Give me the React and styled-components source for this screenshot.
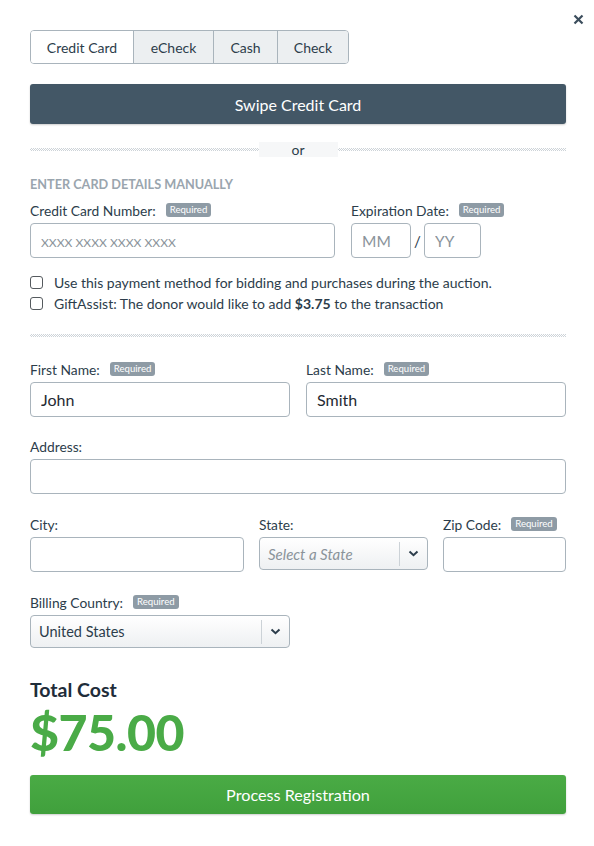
import React from "react";
import styled, { createGlobalStyle } from "styled-components";

const Global = createGlobalStyle`
  html, body { margin: 0; padding: 0; background: #fff; }
  body { font-family: Lato, "Open Sans", Arial, sans-serif; color: #2c3d4b; }
  * { box-sizing: border-box; }
`;

const Page = styled.div`
  position: relative;
  width: 594px;
  min-height: 846px;
  padding: 30px 28px 30px 30px;
  display: flex;
  flex-direction: column;
`;

const Close = styled.button`
  position: absolute;
  top: 12px;
  right: 9px;
  width: 14px;
  height: 14px;
  padding: 0;
  border: 0;
  background: none;
  display: flex;
  align-items: center;
  justify-content: center;
  cursor: pointer;
`;

const Tabs = styled.div`
  display: flex;
  align-self: flex-start;
  height: 34px;
  border: 1px solid #a9b4bc;
  border-radius: 4px;
  overflow: hidden;
`;

const Tab = styled.button`
  font: inherit;
  font-size: 14px;
  color: #2c3d4b;
  width: ${(p) => p.$w}px;
  padding: 0;
  border: 0;
  border-left: ${(p) => (p.$first ? "0" : "1px solid #a9b4bc")};
  background: ${(p) => (p.$active ? "#ffffff" : "#eceff1")};
  cursor: pointer;
`;

const SwipeButton = styled.button`
  margin-top: 20px;
  height: 40px;
  width: 100%;
  border: 0;
  border-radius: 3px;
  background: #435766;
  color: #fff;
  font: inherit;
  font-size: 16px;
  box-shadow: 0 1px 2px rgba(0, 0, 0, 0.2);
`;

const Dots = styled.div`
  flex: 1;
  height: 3px;
  background: repeating-conic-gradient(#cdd3d8 0 25%, transparent 0 50%) 0 0 / 2px 2px;
`;

const OrRow = styled.div`
  margin-top: 18px;
  height: 15px;
  display: flex;
  align-items: center;
`;

const OrText = styled.span`
  width: 79px;
  height: 15px;
  background: #f6f7f8;
  text-align: center;
  font-size: 14px;
  line-height: 15px;
  color: #2c3d4b;
`;

const Divider = styled(Dots)`
  flex: none;
  width: 100%;
  margin-top: ${(p) => p.$mt}px;
`;

const SectionTitle = styled.div`
  margin-top: 20px;
  font-size: 12.7px;
  line-height: 14px;
  font-weight: 700;
  color: #9aa5ae;
  text-transform: uppercase;
`;

const Grid = styled.div`
  display: grid;
  grid-template-columns: ${(p) => p.$cols};
  column-gap: ${(p) => p.$gap}px;
  margin-top: ${(p) => p.$mt}px;
`;

const Field = styled.div`
  display: flex;
  flex-direction: column;
  min-width: 0;
`;

const Label = styled.div`
  height: 16px;
  margin-bottom: 5px;
  display: flex;
  align-items: center;
  font-size: 13.8px;
  color: #2c3d4b;
  white-space: nowrap;
`;

const Badge = styled.span`
  margin-left: 10px;
  background: #8e9ba5;
  color: #fff;
  font-size: 9.6px;
  line-height: 14px;
  height: 14px;
  padding: 0 4px;
  border-radius: 3px;
`;

const Input = styled.input`
  width: ${(p) => (p.$w ? `${p.$w}px` : "100%")};
  height: 35px;
  border: 1px solid #a9b4bc;
  border-radius: 4px;
  padding: 0 10px;
  font: inherit;
  font-size: 16px;
  color: #1f2a33;
  background: #fff;
  outline: none;
  &::placeholder {
    color: #8a939a;
    font-size: ${(p) => (p.$small ? 12.1 : 15.5)}px;
  }
`;

const ExpRow = styled.div`
  display: flex;
  align-items: center;
`;

const Slash = styled.span`
  width: 13px;
  text-align: center;
  font-size: 15px;
  color: #2c3d4b;
`;

const Checks = styled.div`
  margin-top: 14px;
  display: flex;
  flex-direction: column;
`;

const CheckRow = styled.label`
  height: 21px;
  display: flex;
  align-items: center;
  font-size: 14px;
  color: #2c3d4b;
`;

const Box = styled.input`
  appearance: none;
  width: 13px;
  height: 13px;
  margin: 0 11px 0 0;
  border: 1px solid #555a5e;
  border-radius: 3px;
  background: #fff;
`;

const SelectBox = styled.div`
  height: 33px;
  width: ${(p) => (p.$w ? `${p.$w}px` : "100%")};
  border: 1px solid #a9b4bc;
  border-radius: 4px;
  background: linear-gradient(#ffffff, #eef0f2);
  display: flex;
  align-items: center;
`;

const SelectValue = styled.span`
  flex: 1;
  padding-left: 8px;
  font-size: ${(p) => (p.$placeholder ? 15 : 14.5)}px;
  color: ${(p) => (p.$placeholder ? "#8a939a" : "#2c3d4b")};
  font-style: ${(p) => (p.$placeholder ? "italic" : "normal")};
`;

const SelectArrow = styled.span`
  width: 28px;
  height: 24px;
  border-left: 1px solid #ccd2d7;
  display: flex;
  align-items: center;
  justify-content: center;
`;

const TotalLabel = styled.div`
  margin-top: 31px;
  font-size: 19.5px;
  line-height: 22px;
  font-weight: 700;
  color: #1f2d3a;
`;

const Amount = styled.div`
  margin-top: 4px;
  font-size: 50px;
  line-height: 54px;
  font-weight: 900;
  color: #4aab47;
  letter-spacing: -0.5px;
`;

const ProcessButton = styled.button`
  margin-top: 16px;
  height: 39px;
  width: 100%;
  border: 0;
  border-radius: 3px;
  background: linear-gradient(#4aab45, #40a03c);
  color: #fff;
  font: inherit;
  font-size: 16.2px;
  box-shadow: 0 1px 2px rgba(0, 0, 0, 0.2);
`;

const Chevron = () => (
  <svg width="11" height="7" viewBox="0 0 11 7">
    <path d="M1.5 1.5 L5.5 5.2 L9.5 1.5" fill="none" stroke="#2c3d4b" strokeWidth="2" />
  </svg>
);

const Req = () => <Badge>Required</Badge>;

export default function App() {
  return (
    <>
      <Global />
      <Page>
        <Close aria-label="Close">
          <svg width="11" height="11" viewBox="0 0 11 11">
            <path d="M1.5 1.5 L9.5 9.5 M9.5 1.5 L1.5 9.5" stroke="#3b4d5c" strokeWidth="2.2" />
          </svg>
        </Close>

        <Tabs>
          <Tab $first $active $w={102}>Credit Card</Tab>
          <Tab $w={80}>eCheck</Tab>
          <Tab $w={64}>Cash</Tab>
          <Tab $w={71}>Check</Tab>
        </Tabs>

        <SwipeButton>Swipe Credit Card</SwipeButton>

        <OrRow>
          <Dots />
          <OrText>or</OrText>
          <Dots />
        </OrRow>

        <SectionTitle>Enter card details manually</SectionTitle>

        <Grid $cols="1fr 215px" $gap={16} $mt={11}>
          <Field>
            <Label>Credit Card Number: <Req /></Label>
            <Input $small placeholder="XXXX XXXX XXXX XXXX" />
          </Field>
          <Field>
            <Label>Expiration Date: <Req /></Label>
            <ExpRow>
              <Input $w={60} placeholder="MM" />
              <Slash>/</Slash>
              <Input $w={57} placeholder="YY" />
            </ExpRow>
          </Field>
        </Grid>

        <Checks>
          <CheckRow>
            <Box type="checkbox" />
            Use this payment method for bidding and purchases during the auction.
          </CheckRow>
          <CheckRow>
            <Box type="checkbox" />
            <span>
              GiftAssist: The donor would like to add <b>$3.75</b> to the transaction
            </span>
          </CheckRow>
        </Checks>

        <Divider $mt={20} />

        <Grid $cols="1fr 1fr" $gap={16} $mt={24}>
          <Field>
            <Label>First Name: <Req /></Label>
            <Input defaultValue="John" />
          </Field>
          <Field>
            <Label>Last Name: <Req /></Label>
            <Input defaultValue="Smith" />
          </Field>
        </Grid>

        <Grid $cols="1fr" $gap={0} $mt={21}>
          <Field>
            <Label>Address:</Label>
            <Input />
          </Field>
        </Grid>

        <Grid $cols="214px 169px 1fr" $gap={15} $mt={22}>
          <Field>
            <Label>City:</Label>
            <Input />
          </Field>
          <Field>
            <Label>State:</Label>
            <SelectBox>
              <SelectValue $placeholder>Select a State</SelectValue>
              <SelectArrow><Chevron /></SelectArrow>
            </SelectBox>
          </Field>
          <Field>
            <Label>Zip Code: <Req /></Label>
            <Input />
          </Field>
        </Grid>

        <Grid $cols="260px" $gap={0} $mt={22}>
          <Field>
            <Label>Billing Country: <Req /></Label>
            <SelectBox>
              <SelectValue>United States</SelectValue>
              <SelectArrow><Chevron /></SelectArrow>
            </SelectBox>
          </Field>
        </Grid>

        <TotalLabel>Total Cost</TotalLabel>
        <Amount>$75.00</Amount>
        <ProcessButton>Process Registration</ProcessButton>
      </Page>
    </>
  );
}
